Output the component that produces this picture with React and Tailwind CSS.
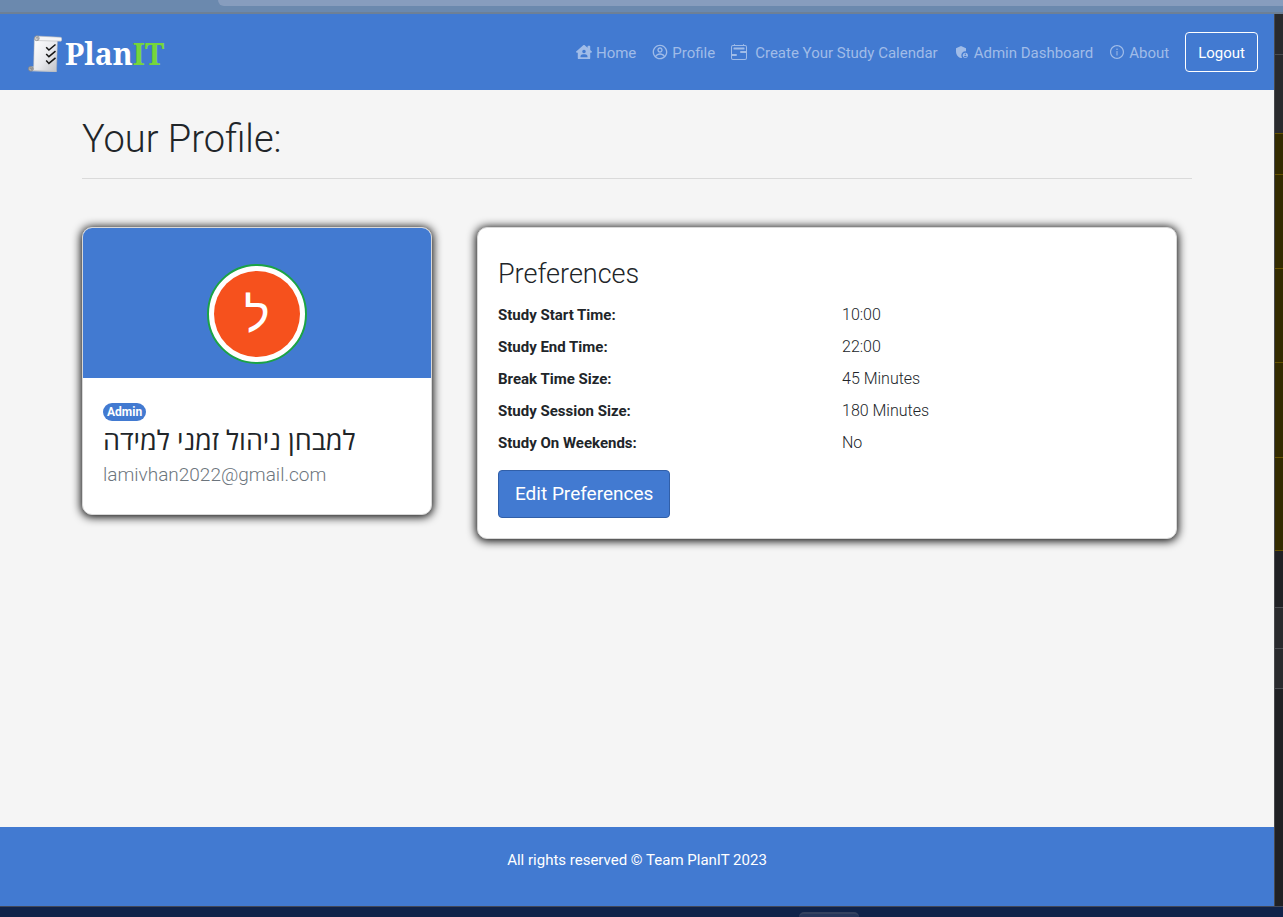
import { FaHouseUser } from "react-icons/fa";
import { CgProfile } from "react-icons/cg";
import { BsCalendar2Range } from "react-icons/bs";
import { MdAdminPanelSettings } from "react-icons/md";
import { AiOutlineInfoCircle } from "react-icons/ai";

const links = [
  { label: "Home", Icon: FaHouseUser, gap: "gap-1" },
  { label: "Profile", Icon: CgProfile, gap: "gap-1" },
  { label: "Create Your Study Calendar", Icon: BsCalendar2Range, gap: "gap-2" },
  { label: "Admin Dashboard", Icon: MdAdminPanelSettings, gap: "gap-1" },
  { label: "About", Icon: AiOutlineInfoCircle, gap: "gap-1" },
];

const preferences = [
  ["Study Start Time:", "10:00"],
  ["Study End Time:", "22:00"],
  ["Break Time Size:", "45 Minutes"],
  ["Study Session Size:", "180 Minutes"],
  ["Study On Weekends:", "No"],
];

const card =
  "overflow-hidden rounded-[10px] border border-[#d8d8d8] bg-white shadow-[0_1px_10px_1px_#000000]";

function ScrollLogo() {
  return (
    <svg viewBox="0 0 34 38" className="h-[38px] w-[34px]" aria-hidden="true">
      <defs>
        <linearGradient id="paper" x1="0" y1="0" x2="1" y2="1">
          <stop offset="0" stopColor="#ffffff" />
          <stop offset="0.55" stopColor="#e8e9ed" />
          <stop offset="1" stopColor="#bfc1c6" />
        </linearGradient>
      </defs>
      <path d="M3 31.500h24.500l1 5.500L3.500 36.200z" fill="#d0d1d4" />
      <path d="M6.300 3.500L29.500 4.500 28.500 36.500 5.500 35.500z" fill="url(#paper)" stroke="#aeb0b5" strokeWidth=".5" />
      <path d="M8.500 1L33 2.300C34.200 3 34 5.500 33 6.200L8.500 5.500z" fill="#f5f5f6" stroke="#b6b7ba" strokeWidth=".6" />
      <circle cx="8.800" cy="3.300" r="2.400" fill="#d5d5d6" stroke="#8d8e91" strokeWidth=".8" />
      <path d="M8.200 3.500a1 1 0 1 1 1.100.8" fill="none" stroke="#777" strokeWidth=".6" />
      <circle cx="2.800" cy="33.800" r="2.400" fill="#b3b3b3" stroke="#838486" strokeWidth=".8" />
      <path d="M2 34a1 1 0 1 1 1.300.8" fill="none" stroke="#666" strokeWidth=".6" />
      <g fill="none" stroke="#151515" strokeWidth="1.500">
        <path d="M18.200 12.200l2.700 2.800 6.600-5.500" />
        <path d="M18.200 18.900l2.700 2.800 6.600-5.500" />
        <path d="M18.200 25.600l2.700 2.800 6.600-5.500" />
      </g>
    </svg>
  );
}

function Navbar() {
  return (
    <header className="flex h-[76px] items-center justify-between bg-[#427ad1] pr-4 pl-7">
      <a href="#" className="flex items-center gap-[3px] pt-1">
        <ScrollLogo />
        <span className="font-['Noto_Serif','DejaVu_Serif',serif] text-[30px] leading-9 font-bold text-white">
          Plan<span className="text-[#76d63b]">IT</span>
        </span>
      </a>
      <nav className="flex items-center gap-4 whitespace-nowrap">
        {links.map(({ label, Icon, gap }) => (
          <a key={label} href="#" className={`flex items-center text-[15px] text-[#a0bce8] ${gap}`}>
            <Icon className="size-4" />
            <span className="pt-0.5">{label}</span>
          </a>
        ))}
        <button type="button" className="h-10 rounded border border-white px-3 pt-0.5 text-[15px] text-white">
          Logout
        </button>
      </nav>
    </header>
  );
}

function ProfileCard() {
  return (
    <section className={`w-[350px] ${card}`}>
      <div className="flex h-[150px] items-center justify-center bg-[#427ad1] pt-[22px]">
        <div className="flex size-[100px] items-center justify-center rounded-full border-2 border-[#1ba345] bg-white">
          <div className="flex size-[86px] items-center justify-center rounded-full bg-[#f6511d] pt-1 text-5xl text-white">
            <span className="font-['Liberation_Sans',sans-serif]">ל</span>
          </div>
        </div>
      </div>
      <div className="flex flex-col items-start px-5 py-[25px]">
        <span className="rounded-full bg-[#427ad1] px-1 text-xs leading-[18px] font-bold text-white">Admin</span>
        <h2 className="mt-[3px] font-['Open_Sans','Liberation_Sans',sans-serif] text-[27px] leading-8" dir="rtl">
          למבחן ניהול זמני למידה
        </h2>
        <p className="mt-[5px] text-[19px] leading-7 font-light text-[#6c757d]">lamivhan2022@gmail.com</p>
      </div>
    </section>
  );
}

function PreferencesCard() {
  return (
    <section className={`w-[700px] px-5 pt-[29px] pb-5 ${card}`}>
      <h2 className="text-[27px] leading-[34px] font-light">Preferences</h2>
      <dl className="mt-2">
        {preferences.map(([name, value]) => (
          <div key={name} className="grid h-8 grid-cols-[344px_1fr] items-center">
            <dt className="text-[15px] font-bold">{name}</dt>
            <dd className="text-base font-light">{value}</dd>
          </div>
        ))}
      </dl>
      <button type="button" className="mt-[11px] h-12 rounded border border-[#315fa8] bg-[#427ad1] px-4 text-[19px] text-white">
        Edit Preferences
      </button>
    </section>
  );
}

function SidePanel() {
  return (
    <aside className="flex w-[9px] shrink-0 flex-col border-l border-[#47494d] bg-[#202124]">
      <div className="h-[41px] border-b border-[#4a4c50] bg-[#292a2d]" />
      <div className="h-[78px] bg-[#292a2d]" />
      <div className="h-[42px] border-y border-[#665200] bg-[#332b00]" />
      <div className="h-[94px] border-b border-[#665200] bg-[#332b00]" />
      <div className="h-[94px] border-b border-[#665200] bg-[#332b00]" />
      <div className="h-[95px] border-b border-[#665200] bg-[#332b00]" />
      <div className="h-[93px] border-b border-[#665200] bg-[#332b00]" />
      <div className="h-[57px] border-b border-[#4a4c50]" />
      <div className="h-[41px] border-b border-[#4a4c50] bg-[#292a2d]" />
      <div className="h-[40px] border-b border-[#4a4c50] bg-[#292a2d]" />
    </aside>
  );
}

export default function App() {
  return (
    <div className="flex min-h-screen flex-col overflow-hidden bg-[#f5f5f5] font-['Roboto','Open_Sans',sans-serif] text-[#212529]">
      <div className="h-[14px] border-b-2 border-[#6d8096] bg-[#6b89ae] pl-[218px]">
        <div className="h-[6px] rounded-bl-2xl bg-[#879dbe]" />
      </div>
      <div className="flex flex-1">
        <div className="flex min-w-0 flex-1 flex-col">
          <Navbar />
          <main className="mx-auto w-full max-w-[1110px] flex-1 pt-[25px]">
            <h1 className="text-[38px] leading-12 font-light">Your Profile:</h1>
            <hr className="mt-[15px] border-[#dadada]" />
            <div className="mt-12 flex items-start gap-[45px]">
              <ProfileCard />
              <PreferencesCard />
            </div>
          </main>
          <footer className="h-[79px] bg-[#427ad1] pt-[21px] text-center text-[15px] leading-6 text-white">
            All rights reserved © Team PlanIT 2023
          </footer>
        </div>
        <SidePanel />
      </div>
      <div className="h-[11px] border-t border-[#41485a] bg-[#102349] pl-[799px]">
        <div className="mt-[5px] h-[5px] w-[60px] rounded-t-lg border-t-2 border-[#34425f] bg-[#26365a]" />
      </div>
    </div>
  );
}
